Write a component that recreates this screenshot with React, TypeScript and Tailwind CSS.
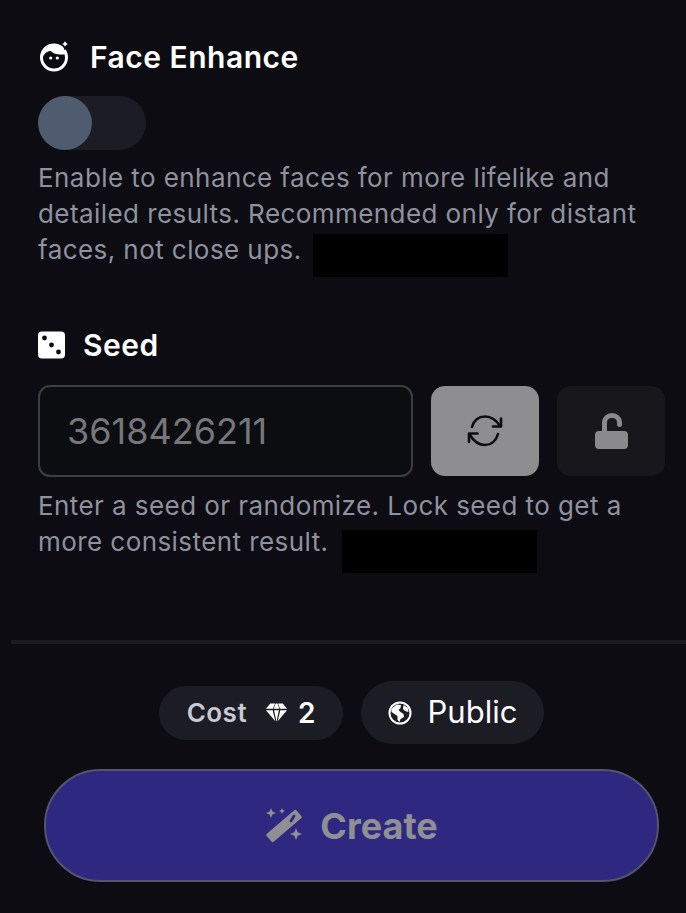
function FaceIcon() {
  return (
    <svg viewBox="0 0 32 32" className="w-[32px] h-[32px] text-white overflow-visible" fill="none">
      <circle cx="16" cy="16.500" r="12.500" stroke="currentColor" strokeWidth="3" />
      <path d="M5 15.500C7 11.500 10 10 13 10c2 3 7 3.500 14 3.500L24 5l-12-2-7 5z" fill="currentColor" />
      <circle cx="12.700" cy="17" r="1.600" fill="currentColor" />
      <circle cx="19.300" cy="17" r="1.600" fill="currentColor" />
      <path
        d="M27 -2.500c.7 3.700 1.800 4.800 5.500 5.500-3.700.7-4.800 1.800-5.500 5.500-.7-3.700-1.800-4.800-5.500-5.500 3.700-.7 4.800-1.800 5.500-5.500z"
        fill="currentColor"
        stroke="#0c0c12"
        strokeWidth="1.500"
      />
    </svg>
  );
}

function DiceIcon() {
  return (
    <svg viewBox="0 0 28 28" className="w-[28px] h-[28px]">
      <rect x="0" y="0.500" width="27" height="27" rx="4" fill="#fff" />
      <circle cx="6.500" cy="7" r="2.400" fill="#0c0c12" />
      <circle cx="13.500" cy="14" r="2.400" fill="#0c0c12" />
      <circle cx="20.500" cy="21" r="2.400" fill="#0c0c12" />
    </svg>
  );
}

function SyncIcon() {
  return (
    <svg viewBox="0 0 36 36" className="w-[36px] h-[36px]" fill="none" stroke="#0c0c12" strokeWidth="2.600" strokeLinecap="round" strokeLinejoin="round">
      <path d="M5 14C7 7 12 3.500 18 3.500c7 0 11.500 4 15 9.500" />
      <path d="M34 5.500v8h-8" />
      <path d="M31 21c-2 7-7 11-13 11-7 0-11.500-4-15-10" />
      <path d="M2 29v-8.500h8.500" />
    </svg>
  );
}

function UnlockIcon() {
  return (
    <svg viewBox="0 0 33 36" className="w-[33px] h-[36px]" fill="none">
      <path d="M9.500 20V9.500c0-4 3.300-7 7.500-7s7.500 3 7.500 7v2" stroke="#8a8a8c" strokeWidth="5" strokeLinecap="round" />
      <rect x="0" y="18" width="33" height="18" rx="4" fill="#8a8a8c" />
    </svg>
  );
}

function GlobeIcon() {
  return (
    <svg viewBox="0 0 24 24" className="w-[24px] h-[24px]" fill="#fff">
      <circle cx="12" cy="12" r="10.500" fill="none" stroke="#fff" strokeWidth="2" />
      <path d="M3.500 8L8.500 3.500 13 4l-.5 3-2 2 2 2 3 2 .5 3-3.500 2-1 3-2-2v-4l-3-2-3-2z" />
      <path d="M15.500 4l4.500 3 .5 4-3.500-1-2-2z" />
    </svg>
  );
}

function GemIcon() {
  return (
    <svg viewBox="0 0 24 20" className="w-[23px] h-[20px]" fill="#fff">
      <path d="M5.500 0h5L8.200 5.500H1z" />
      <path d="M13.500 0h5l4.500 5.500h-7.200z" />
      <path d="M11 0h2l2 5.500H9z" />
      <path d="M1 7h7l2.800 11.500z" />
      <path d="M9.500 7h5L12 19z" />
      <path d="M16 7h7l-9.800 11.500z" />
    </svg>
  );
}

function WandIcon() {
  return (
    <svg viewBox="0 0 38 38" className="w-[38px] h-[38px]" fill="#8f8f94">
      <path d="M2.400 28L30.400 4 35.600 10 7.600 34z" stroke="#8f8f94" strokeWidth="2.500" strokeLinejoin="round" />
      <path d="M26 14l3-5" stroke="#2e2880" strokeWidth="2.800" strokeLinecap="round" />
      <path d="M6 1l1.400 3.600L11 6 7.400 7.400 6 11 4.600 7.400 1 6l3.600-1.400z" />
      <path d="M17 1l.9 2.100L20 4l-2.100.9L17 7l-.9-2.100L14 4l2.100-.9z" />
      <path d="M31 21l1.700 4.300L37 27l-4.300 1.700L31 33l-1.700-4.300L25 27l4.300-1.700z" />
    </svg>
  );
}

export default function App() {
  return (
    <div className="w-[686px] h-[913px] overflow-hidden bg-[#0c0c12] font-['Inter',sans-serif]">
      <div className="pl-[38px] pt-[40px]">
        <div className="flex items-center gap-[20px] h-[34px]">
          <FaceIcon />
          <h2 className="text-[30px] leading-[34px] tracking-[0.5px] font-semibold text-white">Face Enhance</h2>
        </div>
        <div className="mt-[22px] w-[108px] h-[54px] rounded-full bg-[#1c1c24]">
          <div className="w-[54px] h-[54px] rounded-full bg-[#4f5c70]" />
        </div>
        <p className="mt-[10px] w-[625px] text-[26px] leading-[36px] tracking-[0.43px] text-[#8f929e]">
          Enable to enhance faces for more lifelike and detailed results. Recommended only for distant faces, not close ups.
          <span className="inline-block align-top ml-[11px] mt-[2px] w-[195px] h-[43px] bg-black" />
        </p>

        <div className="mt-[51px] flex items-center gap-[17px] h-[34px]">
          <DiceIcon />
          <h2 className="text-[30px] leading-[34px] tracking-[0.5px] font-semibold text-white">Seed</h2>
        </div>
        <div className="mt-[23px] flex items-center gap-[18px]">
          <div className="w-[375px] h-[92px] flex items-center px-[27px] rounded-[12px] border-2 border-[#3d3e45] text-[36px] text-[#77777b] bg-[#0c0d11]">
            3618426211
          </div>
          <button className="w-[108px] h-[90px] flex items-center justify-center rounded-[14px] bg-[#8e8e90]">
            <SyncIcon />
          </button>
          <button className="w-[108px] h-[90px] flex items-center justify-center rounded-[14px] bg-[#18181c]">
            <UnlockIcon />
          </button>
        </div>
        <p className="mt-[11px] w-[625px] text-[26px] leading-[36px] tracking-[0.43px] text-[#8f929e]">
          Enter a seed or randomize. Lock seed to get a more consistent result.
          <span className="inline-block align-top ml-[13px] mt-[6px] w-[195px] h-[43px] bg-black" />
        </p>
      </div>

      <div className="ml-[11px] mt-[67px] h-[4px] bg-[#1a1a21]" />

      <div className="mt-[37px] flex items-center justify-center gap-[18px] pl-[17px]">
        <div className="h-[54px] flex items-center gap-[18px] pl-[28px] pr-[27px] rounded-full bg-[#1c1c24]">
          <span className="text-[26px] tracking-[0.5px] font-semibold text-[#c9c9d2]">Cost</span>
          <span className="flex items-center gap-[10px] text-[28px] font-semibold text-white">
            <GemIcon />2
          </span>
        </div>
        <div className="h-[63px] flex items-center gap-[16px] px-[27px] rounded-full bg-[#1c1c24] text-[31px] text-white">
          <GlobeIcon />
          Public
        </div>
      </div>

      <button className="ml-[44px] mt-[25px] w-[615px] h-[113px] flex items-center justify-center gap-[17px] rounded-full border-2 border-[#55536f] bg-[#2e2880] text-[36px] font-bold text-[#8f8f94]">
        <WandIcon />
        Create
      </button>
    </div>
  );
}
